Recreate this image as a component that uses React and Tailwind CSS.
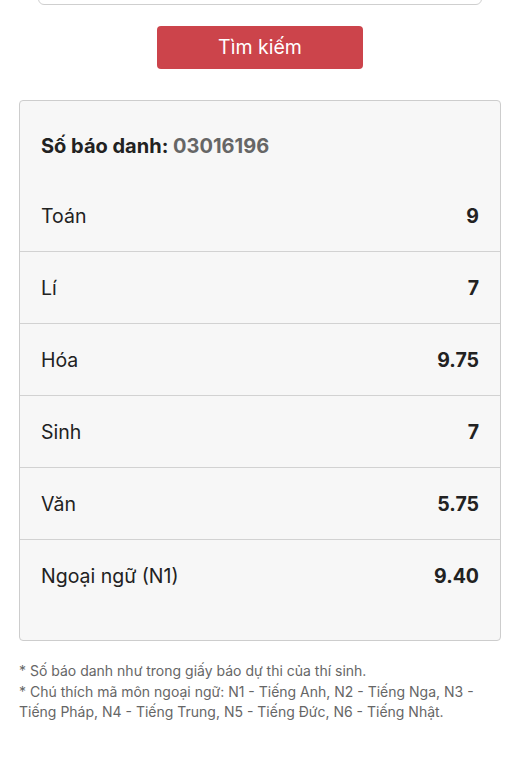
import React from 'react'

const scores = [
    { name: 'Toán', value: '9' },
    { name: 'Lí', value: '7' },
    { name: 'Hóa', value: '9.75' },
    { name: 'Sinh', value: '7' },
    { name: 'Văn', value: '5.75' },
    { name: 'Ngoại ngữ (N1)', value: '9.40' },
]

export default function App() {
    return (
        <div
            className="min-h-[768px] bg-white overflow-hidden"
            style={{ fontFamily: 'Inter, "Noto Sans", sans-serif' }}
        >
            {/* search input, mostly scrolled out of view */}
            <div className="mx-[38px] mt-[-36px] h-[41px] rounded-md border border-[#cfcfcf] bg-white" />

            <div className="flex justify-center mt-[21px]">
                <button
                    type="button"
                    className="w-[206px] h-[43px] rounded-[4px] bg-[#cc444b] text-white text-[19.5px] font-normal"
                >
                    Tìm kiếm
                </button>
            </div>

            <div className="mx-[19px] mt-[31px] rounded-[4px] border border-[#cdcdcd] bg-[#f7f7f7] pb-[29px]">
                <div className="px-[21px] pt-[33px] pb-[22px] text-[20px] leading-6 font-bold text-[#222]">
                    Số báo danh: <span className="text-[#666]">03016196</span>
                </div>
                {scores.map((row, i) => (
                    <div
                        key={row.name}
                        className={
                            i === 0
                                ? 'flex items-center justify-between px-[21px] pt-[2px] h-[71px] text-[19.5px] text-[#222]'
                                : 'flex items-center justify-between px-[21px] pt-[2px] h-[72px] text-[19.5px] text-[#222] border-t border-[#d2d2d2]'
                        }
                    >
                        <span>{row.name}</span>
                        <span className="font-bold">{row.value}</span>
                    </div>
                ))}
            </div>

            <div className="mx-[19px] mt-[20px] text-[14px] leading-[20.5px] text-[#666]">
                <p>* Số báo danh như trong giấy báo dự thi của thí sinh.</p>
                <p>* Chú thích mã môn ngoại ngữ: N1 - Tiếng Anh, N2 - Tiếng Nga, N3 - Tiếng Pháp, N4 - Tiếng Trung, N5 - Tiếng Đức, N6 - Tiếng Nhật.</p>
            </div>
        </div>
    )
}
